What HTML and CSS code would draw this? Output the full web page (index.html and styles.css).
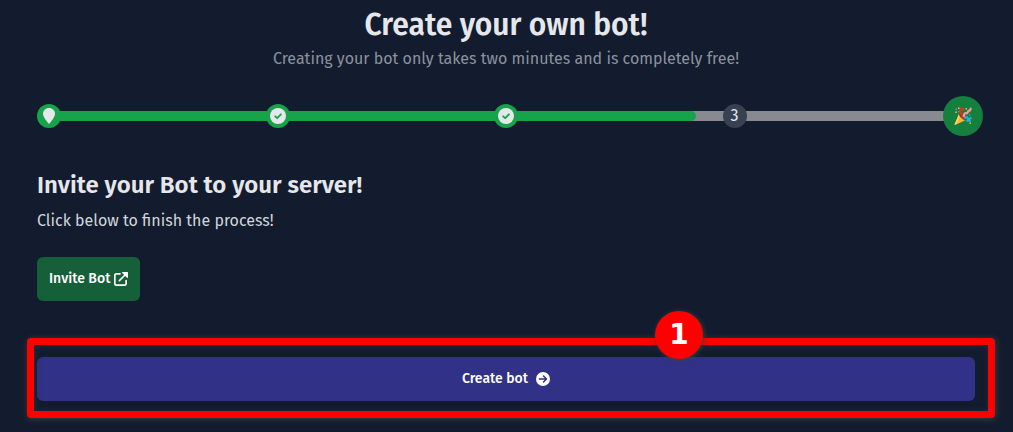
FILE: index.html
```html
<!DOCTYPE html>
<html lang="en">
<head>
<meta charset="utf-8">
<meta name="viewport" content="width=device-width, initial-scale=1">
<title>Create your own bot!</title>
<link rel="stylesheet" href="styles.css">
</head>
<body>
<main class="page">
  <header class="intro">
    <h1 class="title">Create your own bot!</h1>
    <p class="subtitle">Creating your bot only takes two minutes and is completely free!</p>
  </header>

  <div class="stepper">
    <div class="track"><div class="fill" style="width: 70.8%"></div></div>
    <ol class="steps">
      <li class="step done"><svg class="step-icon" viewBox="0 0 16 16" aria-label="Start"><path fill="#e5e7eb" d="M8 0C4.600 0 2 2.500 2 5.800 2 8.800 5 12.500 8 16c3-3.500 6-7.200 6-10.200C14 2.500 11.400 0 8 0Z"/></svg></li>
      <li class="step done"><svg class="step-icon" viewBox="0 0 16 16" aria-label="Done"><circle cx="8" cy="8" r="8" fill="#e5e7eb"/><path fill="none" stroke="#16a34a" stroke-width="1.800" stroke-linecap="round" stroke-linejoin="round" d="m5.200 8.300 2 1.900 3.700-3.900"/></svg></li>
      <li class="step done"><svg class="step-icon" viewBox="0 0 16 16" aria-label="Done"><circle cx="8" cy="8" r="8" fill="#e5e7eb"/><path fill="none" stroke="#16a34a" stroke-width="1.800" stroke-linecap="round" stroke-linejoin="round" d="m5.200 8.300 2 1.900 3.700-3.900"/></svg></li>
      <li class="step">3</li>
      <li class="step finish"><svg class="party" viewBox="0 0 18 18" aria-label="Finish">
        <path fill="#ffb636" d="M.5 17.500 5 7c2.500 1 5.500 4 6.300 6.200L1.200 17.900Z"/>
        <path fill="#ffd469" d="M.5 17.500 5 7l1.300.8-3.800 9Z"/>
        <path fill="#8c3b20" d="M5 7c2-.6 7 4 6.300 6.200C9 13.200 4.600 9.200 5 7Z"/>
        <path fill="none" stroke="#d8352a" stroke-width="2.300" d="M7.600 10.500c2.200-1.500 2-3.500.4-4C5.600 6 5.300 2.600 7 1.700c1.600-.5 2.600 1.200 1.500 2.200"/>
        <path fill="none" stroke="#f59aa5" stroke-width="2.300" d="M10 9.800c-.4-2.700 1-4 2.400-3.600 1.800.4 1-2.400 2.800-2.500 1.600 0 .5-2 2.300-2.400"/>
        <path fill="none" stroke="#2baedb" stroke-width="2.200" d="M10.500 11.600c1.700-2.300 2.800-1.800 3.200-.5.500 1.300 1.800 1.300 3.600-.6M12.300 13.800c1.800-.8 2.500.3 4.400-.1"/>
        <path fill="#ffb636" d="M4 .5h1.500V2H4zM1.300 4.500h1.500V6H1.300zM15.500 15.500H17V17h-1.500zM11.500 1H13v1.500h-1.500z"/>
        <path fill="#2baedb" d="M1.500 1.500H3V3H1.500zM4 4h1.200v1.200H4zM15 7.500h1.300v1.300H15z"/>
      </svg></li>
    </ol>
  </div>

  <section class="invite">
    <h2 class="heading">Invite your Bot to your server!</h2>
    <p class="copy">Click below to finish the process!</p>
    <button class="button button-green" type="button">Invite Bot
      <svg class="button-icon" viewBox="0 0 14 14" aria-hidden="true"><path fill="none" stroke="#fff" stroke-width="1.700" stroke-linecap="round" stroke-linejoin="round" d="M6 1.800H2.300A1.500 1.500 0 0 0 .8 3.300v8.200A1.600 1.600 0 0 0 2.400 13.200h8.200a1.500 1.500 0 0 0 1.500-1.500V8.500M5.400 8.600 12 2"/><path fill="#fff" d="M8.700 0h4.700a.6.6 0 0 1 .6.600v4.700c0 .6-.6.800-1 .4L8.300 1c-.4-.4-.2-1 .4-1Z"/></svg>
    </button>
  </section>

  <div class="submit">
    <button class="button button-indigo" type="button">Create bot
      <svg class="button-icon" viewBox="0 0 14 14" aria-hidden="true"><circle cx="7" cy="7" r="7" fill="#fff"/><path fill="none" stroke="#313187" stroke-width="1.500" stroke-linecap="round" stroke-linejoin="round" d="M3.400 7h7M7.500 4l3 3-3 3"/></svg>
    </button>
    <div class="callout"><span class="callout-number">1</span></div>
  </div>
</main>
</body>
</html>
```
FILE: styles.css
```css
* { box-sizing: border-box; }
body {
  margin: 0;
  background: #131c2e;
  color: #e5e7eb;
  font-family: "Fira Sans", "Noto Sans", sans-serif;
  font-size: 16px;
  line-height: 24px;
}
h1, h2, p, ol { margin: 0; padding: 0; }
.page { padding: 7px 38px 31px 37px; }
.intro { text-align: center; }
.title { font-size: 30px; line-height: 36px; font-weight: 600; }
.subtitle { margin-top: 4px; color: #8b929e; }
.stepper { display: grid; align-items: center; margin-top: 33px; }
.track, .steps { grid-area: 1 / 1; }
.track { height: 10px; margin: 0 12px; background: #888a91; }
.fill { height: 100%; background: #16a34a; border-radius: 0 5px 5px 0; }
.steps { display: flex; justify-content: space-between; list-style: none; }
.step {
  display: flex;
  align-items: center;
  justify-content: center;
  width: 24px;
  height: 24px;
  border-radius: 50%;
  background: #374151;
}
.done { background: #16a34a; }
.finish { width: 40px; height: 40px; margin: -8px; background: #15803d; }
.step-icon { width: 16px; height: 16px; }
.party { width: 18px; height: 18px; }
.invite { margin-top: 41px; }
.heading { font-size: 24px; line-height: 32px; font-weight: 600; }
.copy { margin: 8px 0 24px; color: #d1d5db; }
.button {
  display: flex;
  align-items: center;
  justify-content: center;
  height: 44px;
  padding: 0 12px;
  border: 0;
  border-radius: 6px;
  color: #fff;
  font-family: inherit;
  font-size: 14px;
  font-weight: 500;
  line-height: 20px;
}
.button-icon { width: 14px; height: 14px; }
.button-green { gap: 4px; background: #166039; }
.button-indigo { gap: 8px; width: 100%; background: #313187; }
.submit { position: relative; margin-top: 56px; }
.callout {
  position: absolute;
  inset: -19px -20px -17px -10px;
  border: 7px solid #f00;
  border-radius: 4px;
  box-shadow: 1px 1px 6px #34443f, inset 1px 1px 6px #34443f80;
  pointer-events: none;
}
.callout-number {
  position: absolute;
  top: -34px;
  left: calc(65% + 1px);
  width: 48px;
  height: 48px;
  border-radius: 50%;
  background: #f00;
  box-shadow: 1px 1px 5px #34443f;
  color: #fff;
  font: bold 28px/48px "DejaVu Sans", sans-serif;
  text-align: center;
}
```
